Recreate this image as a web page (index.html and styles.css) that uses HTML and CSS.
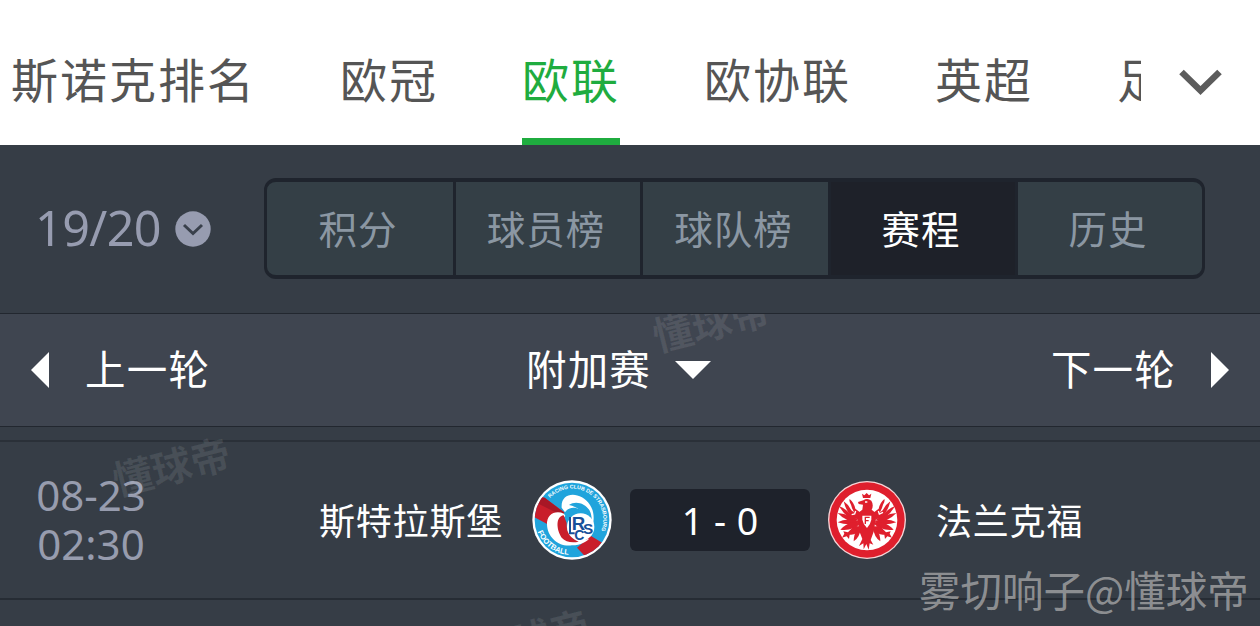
FILE: index.html
```html
<!DOCTYPE html>
<html lang="zh-CN">
<head>
  <meta charset="UTF-8" />
  <title>欧联 - 赛程</title>
  <link rel="stylesheet" href="styles.css">
</head>
<body>
  <header class="tabs">
    <nav class="tab-list">
      <a class="tab">斯诺克排名</a>
      <a class="tab">欧冠</a>
      <a class="tab active">欧联</a>
      <a class="tab">欧协联</a>
      <a class="tab">英超</a>
      <a class="tab">足球</a>
    </nav>
    <svg class="more" width="44" height="30" viewBox="0 0 44 30"><path d="M2.500 4 L21.500 22.500 L40.500 4" fill="none" stroke="#5c5c5c" stroke-width="6.500"/></svg>
  </header>

  <section class="filter">
    <div class="season">
      <span>19/20</span>
      <svg width="36" height="36" viewBox="0 0 36 36"><circle cx="18" cy="18" r="17.700" fill="#979cb0"/><path d="M9 14 L18 22.500 L27 14" fill="none" stroke="#39404b" stroke-width="3"/></svg>
    </div>
    <div class="segments">
      <a class="segment">积分</a>
      <a class="segment">球员榜</a>
      <a class="segment">球队榜</a>
      <a class="segment active">赛程</a>
      <a class="segment">历史</a>
    </div>
  </section>

  <section class="round">
    <span class="mark mark-round">懂球帝</span>
    <a class="round-link prev"><svg width="18" height="36" viewBox="0 0 18 36"><path d="M18 0 V36 L0 18 Z" fill="#fff"/></svg><span>上一轮</span></a>
    <a class="round-link current"><span>附加赛</span><svg width="36" height="18" viewBox="0 0 36 18"><path d="M0 0 H36 L18 18 Z" fill="#fff"/></svg></a>
    <a class="round-link next"><span>下一轮</span><svg width="18" height="36" viewBox="0 0 18 36"><path d="M0 0 V36 L18 18 Z" fill="#fff"/></svg></a>
  </section>

  <main class="matches">
    <span class="mark mark-match">懂球帝</span>
    <div class="match">
      <div class="time"><span>08-23</span><span>02:30</span></div>
      <div class="team home">斯特拉斯堡</div>
      <svg class="crest" width="80" height="80" viewBox="37 29 240 240">
        <defs>
          <clipPath id="disc"><circle cx="157" cy="149" r="112"/></clipPath>
          <path id="arc-top" d="M91 83 A93 93 0 0 1 239 193"/>
          <path id="arc-bottom" d="M54 184 A108 108 0 0 0 152 254"/>
        </defs>
        <circle cx="157" cy="149" r="119" fill="#fff"/>
        <g clip-path="url(#disc)">
          <rect x="37" y="29" width="240" height="240" fill="#20a4dc"/>
          <path d="M30 66 L75 82 L134 126 L112 177 L36 136 Z" fill="#c91e2b"/>
          <path d="M172 232 L213 196 L262 226 L212 275 Z" fill="#c91e2b"/>
          <path d="M75 82 L133 127 L130 137 L36 90 Z" fill="#a81726"/>
          <path d="M126 112 C122 62 184 62 211 104 C230 132 222 174 205 190 C209 158 205 129 178 116 C158 107 143 114 136 126 Z" fill="#fff"/>
          <path d="M148 104 C169 88 204 101 213 128 C220 154 216 171 208 184 C208 148 190 113 148 104 Z" fill="#20a4dc"/>
          <path d="M133 130 C108 118 80 131 82 163 C83 199 116 231 157 225 C184 224 201 214 208 205 C183 214 148 207 137 189 C123 167 126 146 137 137 Z" fill="#fff"/>
          <path d="M132 135 C108 138 109 177 126 202 C138 216 158 218 177 214 C151 203 139 183 141 158 Z" fill="#c91e2b"/>
          <circle cx="183" cy="170" r="41" fill="#fff"/>
        </g>
        <text class="crest-top"><textPath href="#arc-top" textLength="254" lengthAdjust="spacingAndGlyphs">RACING CLUB DE STRASBOURG</textPath></text>
        <text class="crest-bottom"><textPath href="#arc-bottom" textLength="122" lengthAdjust="spacingAndGlyphs">FOOTBALL</textPath></text>
        <g class="crest-letters">
          <text x="156" y="178" font-size="56">R</text>
          <text x="190" y="191" font-size="46">S</text>
          <text x="164" y="208" font-size="42">C</text>
        </g>
        <path d="M151 140 V189 H165" fill="none" stroke="#17519a" stroke-width="6"/>
      </svg>
      <div class="score">1 - 0</div>
      <svg class="crest" width="80" height="80" viewBox="23 30 240 240">
        <circle cx="143" cy="150" r="117" fill="#f7d5d7"/>
        <circle cx="143" cy="150" r="113" fill="#df1f2d"/>
        <circle cx="143" cy="150" r="91" fill="#fff"/>
        <g fill="#df1f2d">
          <path d="M128 71 L135 76 L142 69 L149 76 L156 71 L153 84 H131 Z"/>
          <path d="M116 96 L132 91 Q144 82 156 92 Q164 105 157 119 L172 131 L163 185 L154 210 L162 224 L151 220 L148 239 L141 222 L133 238 L132 220 L119 228 L129 207 L120 184 L112 132 L129 119 L131 104 L118 102 Z"/>
          <g id="wing">
            <path d="M123 145 Q104 137 95 104 Q88 93 91 87 Q104 98 108 116 L129 132 Z"/>
            <path d="M119 150 Q84 141 73 94 Q87 103 96 121 L117 137 Z"/>
            <path d="M120 153 Q81 149 60 109 Q76 114 91 130 Z"/>
            <path d="M123 158 Q80 157 55 129 Q74 130 94 140 Z"/>
            <path d="M125 155 Q92 170 55 157 Q72 147 96 149 Z"/>
            <path d="M126 158 Q100 184 63 179 Q77 164 98 157 Z"/>
            <path d="M126 170 Q112 197 91 194 L89 207 L82 199 L68 203 L75 191 L72 184 L86 187 L105 167 Z"/>
            <path d="M127 168 Q121 204 103 214 Q103 195 115 172 Z"/>
          </g>
          <use href="#wing" transform="translate(286 0) scale(-1 1)"/>
        </g>
        <path d="M129 137 H156 V149 Q153 164 143 174 Q132 164 129 149 Z" fill="#fff"/>
        <path d="M151 142 H138 V162 M138 152 H148" fill="none" stroke="#df1f2d" stroke-width="4"/>
        <path d="M109 123 L106 132 L97 134 M177 123 L180 132 L191 127 M137 96 H144" fill="none" stroke="#fff" stroke-width="4"/>
      </svg>
      <div class="team away">法兰克福</div>
    </div>
    <div class="next-match"><span class="mark mark-next">懂球帝</span></div>
  </main>

  <div class="author">雾切响子@懂球帝</div>
</body>
</html>
```
FILE: styles.css
```css
* { box-sizing: border-box; }
body { position: relative; width: 1260px; height: 626px; margin: 0; overflow: hidden; background: #363d46; font-family: "Noto Sans CJK SC", sans-serif; white-space: nowrap; }
svg { display: block; flex: none; }

.tabs { display: flex; height: 145px; background: #fff; color: #555; }
.tab-list { display: flex; gap: 84px; width: 1141px; padding-left: 11px; overflow: hidden; }
.tab { flex: none; height: 145px; padding-top: 10px; font-size: 47px; line-height: 136px; letter-spacing: 2px; }
.tab.active { color: #1fac3f; border-bottom: 7px solid #1fac3f; }
.more { margin: 68px 0 0 38px; }

.filter { display: flex; height: 168px; padding: 33px 55px 0 35px; }
.season { display: flex; align-items: center; gap: 14px; width: 229px; height: 101px; color: #979cb0; font: 48.5px "Noto Sans", sans-serif; }
.season span { width: 126px; margin-top: -3px; letter-spacing: -0.6px; }
.segments { display: grid; grid-template-columns: 189px 187px 188px 187px 1fr; width: 941px; height: 101px; border: 4px solid #1f242d; border-width: 4px 3px; border-radius: 12px; background: #343f46; color: #8b97a3; overflow: hidden; }
.segment { padding-right: 4px; font-size: 38.5px; line-height: 90px; letter-spacing: 1px; text-align: center; border-right: 3px solid #1f242d; }
.segment:last-child { border-right: 0; }
.segment.active { background: #1e2129; color: #fff; }

.round { position: relative; display: grid; grid-template-columns: 1fr auto 1fr; align-items: center; height: 114px; padding: 0 31px; border-top: 1px solid #22272f; border-bottom: 1px solid #22272f; background: #3f4550; overflow: hidden; }
.round-link { display: flex; align-items: center; color: #fff; font-size: 40.5px; line-height: 100px; letter-spacing: 1.2px; }
.round-link span { margin-top: -5px; }
.prev { gap: 36px; }
.current { gap: 24px; margin-right: 23px; }
.next { gap: 35px; justify-content: flex-end; }

.matches { position: relative; padding-top: 13px; }
.match { display: flex; align-items: center; height: 160px; border-top: 2px solid #2a3038; border-bottom: 2px solid #262c34; }
.time { display: flex; flex-direction: column; align-items: center; width: 112px; margin: -2px 0 0 35px; color: #979cae; font: 42px/49px "Noto Sans", sans-serif; }
.team { margin-top: -3px; color: #fff; font-size: 36px; letter-spacing: 0.8px; }
.home { width: 356px; text-align: right; }
.crest { margin: 0 0 0 29px; }
.score { width: 180px; height: 62px; margin-left: 18px; border-radius: 6px; background: #1e222b; color: #fff; font: 37.5px/64px "Noto Sans", sans-serif; text-align: center; word-spacing: 1px; }
.score + .crest { margin-left: 17px; }
.away { margin-left: 29px; }
.next-match { position: relative; height: 26px; overflow: hidden; }

.crest-top { fill: #fff; font: bold 16px "Liberation Sans", sans-serif; }
.crest-bottom { fill: #fff; font: bold 23px "Liberation Sans", sans-serif; }
.crest-letters { fill: #17519a; font-family: "Liberation Sans", sans-serif; font-weight: bold; }

/* faint brand marks under the content */
.mark { position: absolute; color: rgba(255, 255, 255, 0.09); font-size: 40px; font-weight: bold; line-height: 44px; transform: rotate(-14deg); }
.mark-round { left: 651px; top: -15px; }
.mark-match { left: 111px; top: 16px; }
.mark-next { left: 470px; top: 15px; }
.author { position: absolute; left: 919px; top: 559px; color: rgba(180, 180, 180, 0.7); font-size: 41.5px; line-height: 60px; }
```
